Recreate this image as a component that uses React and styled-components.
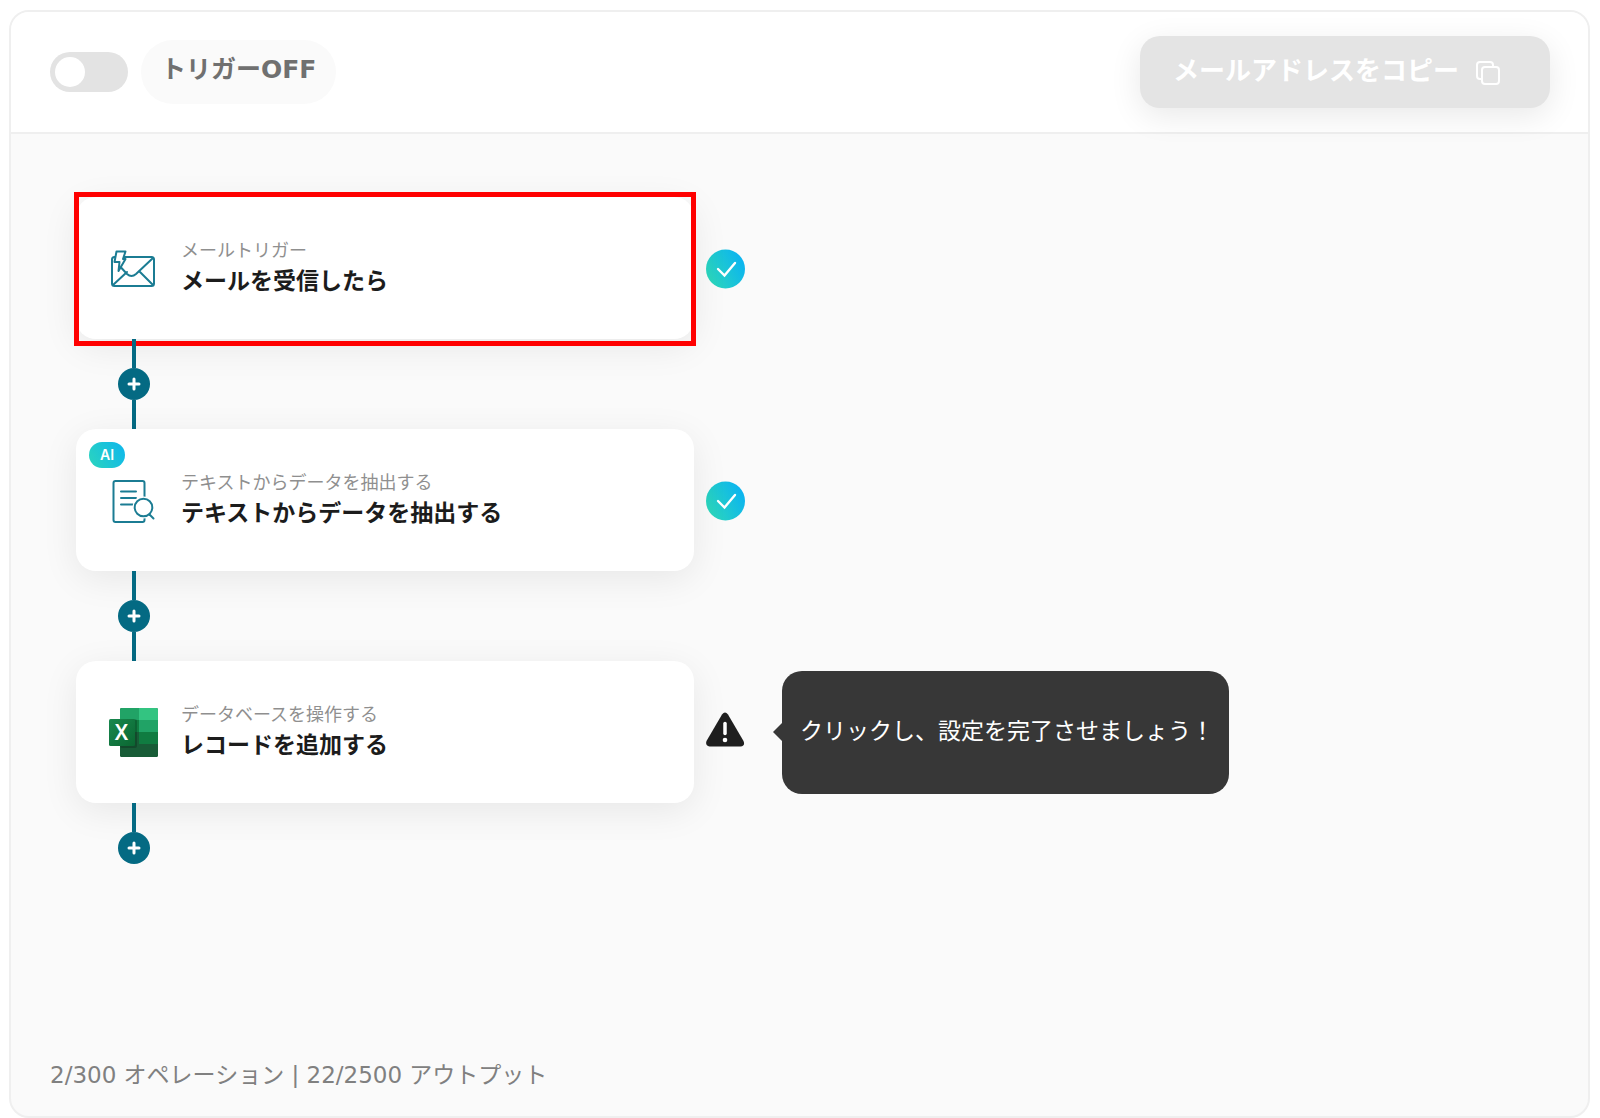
import React, { useState } from "react";
import styled, { createGlobalStyle } from "styled-components";

const teal = "#046a83";
const line = "#efefef";

const GlobalStyle = createGlobalStyle`
  *, *::before, *::after { box-sizing: border-box; }
  body {
    margin: 0;
    background: #fff;
    color: #1c1c1c;
    font-family: "DejaVu Sans", "Noto Sans CJK JP", sans-serif;
  }
  button { font: inherit; color: inherit; border: 0; margin: 0; }
`;

const Page = styled.div`
  display: flex;
  min-height: 100vh;
  padding: 10px 10px 0 9px;
`;

const Panel = styled.main`
  flex: 1;
  min-width: 0;
  display: flex;
  flex-direction: column;
  border: 2px solid ${line};
  border-radius: 20px;
  background: #fafafa;
  overflow: hidden;
`;

const Header = styled.header`
  display: flex;
  align-items: center;
  justify-content: space-between;
  padding: 24px 38px 24px 39px;
  border-bottom: 2px solid ${line};
  background: #fff;
`;

const TriggerSwitch = styled.div`
  display: flex;
  align-items: center;
  gap: 13px;
`;

const Toggle = styled.input`
  appearance: none;
  display: flex;
  width: 78px;
  height: 40px;
  margin: 0;
  padding: 5px;
  border-radius: 20px;
  background: #e3e3e3;
  cursor: pointer;

  &::before {
    content: "";
    width: 30px;
    height: 30px;
    border-radius: 50%;
    background: #fff;
  }

  &:checked {
    justify-content: flex-end;
    background: ${teal};
  }
`;

const ToggleLabel = styled.label`
  padding: 10px 20px 14px;
  border-radius: 32px;
  background: #fafafa;
  color: #707070;
  font-size: 25px;
  font-weight: 700;
  line-height: 40px;
`;

const CopyButton = styled.button`
  display: flex;
  align-items: center;
  gap: 16px;
  padding: 15px 49px 17px 33px;
  border-radius: 20px;
  background: #e4e4e4;
  box-shadow: 0 8px 32px rgba(0, 0, 0, 0.09);

  && {
    color: #fff;
    font-size: 26px;
    font-weight: 700;
    line-height: 40px;
  }

  svg { margin-top: 4px; }
`;

const Flow = styled.ol`
  flex: 1;
  margin: 0;
  padding: 63px 65px;
  list-style: none;
`;

const StepRow = styled.div`
  display: flex;
  align-items: center;
`;

const Card = styled.button`
  position: relative;
  flex: 0 1 618px;
  display: flex;
  align-items: center;
  gap: 22px;
  height: 142px;
  padding: 0 33px;
  border-radius: 20px;
  background: #fff;
  box-shadow: 0 8px 36px rgba(0, 0, 0, 0.08);
  text-align: left;
  cursor: pointer;
`;

const Highlight = styled.span`
  position: absolute;
  inset: -5px -2px -7px;
  border: 5px solid #f00;
`;

const AiBadge = styled.span`
  position: absolute;
  top: 13px;
  left: 13px;
  width: 36px;
  border-radius: 13px;
  background: linear-gradient(60deg, #2cd5bd, #0db6ee);
  color: #fff;
  font-family: Inter, sans-serif;
  font-size: 14px;
  font-weight: 600;
  line-height: 26px;
  text-align: center;
`;

const CardText = styled.span`
  display: flex;
  flex-direction: column;
  padding-bottom: 2px;
`;

const Kind = styled.span`
  color: #8f8f8f;
  font-size: 18px;
  line-height: 28px;
`;

const Title = styled.span`
  font-size: 23px;
  font-weight: 700;
  line-height: 32px;
`;

const Status = styled.span`
  flex: none;
  display: flex;
  width: 40px;
  margin-left: 12px;
`;

const Tip = styled.div`
  position: relative;
  margin-left: 36px;
  padding: 41px 15px 44px 18px;
  border-radius: 20px;
  background: #373737;
  color: #fff;
  font-size: 23px;
  line-height: 38px;

  &::before {
    content: "";
    position: absolute;
    top: 50%;
    right: 100%;
    border: 9px solid transparent;
    border-left: 0;
    border-right-color: #373737;
    transform: translateY(-50%);
  }
`;

const Connector = styled.div`
  display: flex;
  flex-direction: column;
  align-items: center;
  width: 32px;
  margin-left: 42px;
`;

const Wire = styled.span`
  position: relative;
  width: 4px;
  height: 29px;
  background: ${teal};
`;

const AddButton = styled.button`
  position: relative;
  display: flex;
  align-items: center;
  justify-content: center;
  width: 32px;
  height: 32px;
  padding: 0;
  border-radius: 50%;
  background: ${teal};
  cursor: pointer;
`;

const Usage = styled.footer`
  padding: 0 39px 23px;
  color: #808080;
  font-size: 23px;
  line-height: 36px;
`;

const CopyIcon = () => (
  <svg width="26" height="26" viewBox="0 0 26 26" fill="none" stroke="#fff" strokeWidth="2" aria-hidden="true">
    <rect x="7" y="7" width="17" height="17" rx="3" />
    <path d="M7 19H5a3 3 0 0 1-3-3V5a3 3 0 0 1 3-3h10a3 3 0 0 1 3 3v2" />
  </svg>
);

const MailIcon = () => (
  <svg width="50" height="50" viewBox="0 0 50 50" fill="none" stroke="#1b7c93" strokeWidth="2" strokeLinejoin="round" strokeLinecap="round" aria-hidden="true">
    <rect x="3" y="14" width="42" height="29" rx="2.500" />
    <path d="M44 15 27 31q-4.500 4-9 0L12.500 25M4 42l14-13M44 42 30 28" />
    <path d="M7.500 8.500h9L14 16h2.500L9.500 28l1-9H5.500z" fill="#fff" />
  </svg>
);

const DocumentSearchIcon = () => (
  <svg width="50" height="50" viewBox="0 0 50 50" fill="none" stroke="#1b7c93" strokeWidth="2" strokeLinejoin="round" strokeLinecap="round" aria-hidden="true">
    <rect x="4.500" y="6" width="31" height="41" rx="2" />
    <path d="M12 16.500h15M12 23h15M12 29.500h12" />
    <circle cx="34.500" cy="32.500" r="11" fill="#fff" stroke="none" />
    <circle cx="34.500" cy="32.500" r="8.800" />
    <path d="m40.500 39.500 4 4" />
  </svg>
);

const ExcelIcon = () => (
  <svg width="50" height="50" viewBox="0 0 50 50" aria-hidden="true">
    <defs>
      <clipPath id="sheet"><rect x="11" y="1" width="38" height="49" rx="1.500" /></clipPath>
      <linearGradient id="tile" x1="0" y1="0" x2="1" y2="1">
        <stop offset="0" stopColor="#18884f" />
        <stop offset="1" stopColor="#0b6631" />
      </linearGradient>
    </defs>
    <g clipPath="url(#sheet)">
      <rect x="11" y="1" width="38" height="49" fill="#185c37" />
      <rect x="11" y="1" width="19" height="12" fill="#21a366" />
      <rect x="30" y="1" width="19" height="12" fill="#33c481" />
      <rect x="11" y="13" width="19" height="12" fill="#107c41" />
      <rect x="30" y="13" width="19" height="12" fill="#21a366" />
      <rect x="30" y="25" width="19" height="12" fill="#107c41" />
      <rect x="11" y="12" width="17" height="29" rx="2" fill="#000" opacity="0.2" />
    </g>
    <rect x="0" y="12" width="26" height="27" rx="1.500" fill="url(#tile)" />
    <text x="12.500" y="33" textAnchor="middle" fill="#fff" fontFamily="'Noto Sans', sans-serif" fontWeight="600" fontSize="21">X</text>
  </svg>
);

const DoneIcon = () => (
  <svg width="40" height="42" viewBox="0 -2 40 42" role="img" aria-label="設定済み">
    <defs>
      <linearGradient id="done" x1="0" y1="0.800" x2="1" y2="0.300">
        <stop offset="0" stopColor="#2ed9b8" />
        <stop offset="1" stopColor="#0ab3f2" />
      </linearGradient>
    </defs>
    <circle cx="19.500" cy="20" r="19.500" fill="url(#done)" />
    <path d="m12 20 6.500 6.500L29 14" fill="none" stroke="#fff" strokeWidth="2.400" strokeLinecap="round" />
  </svg>
);

const WarningIcon = () => (
  <svg width="40" height="40" viewBox="0 0 40 40" role="img" aria-label="未設定">
    <path d="M16 2.500q3-4 6 0L37.500 29q2 5-3 5.500H3.500Q-1 33.500 .5 29z" fill="#1f1f1f" />
    <path d="M19 11.500v10" stroke="#fff" strokeWidth="3.500" strokeLinecap="round" />
    <circle cx="19" cy="28" r="2.300" fill="#fff" />
  </svg>
);

const PlusIcon = () => (
  <svg width="14" height="14" viewBox="0 0 14 14" stroke="#fff" strokeWidth="3" strokeLinecap="round" aria-hidden="true">
    <path d="M7 2v10M2 7h10" />
  </svg>
);

const steps = [
  { kind: "メールトリガー", title: "メールを受信したら", Icon: MailIcon, done: true, selected: true },
  { kind: "テキストからデータを抽出する", title: "テキストからデータを抽出する", Icon: DocumentSearchIcon, done: true, ai: true },
  { kind: "データベースを操作する", title: "レコードを追加する", Icon: ExcelIcon, tip: "クリックし、設定を完了させましょう！" },
];

function Step({ step, last }) {
  const { kind, title, Icon, done, selected, ai, tip } = step;
  return (
    <li>
      <StepRow>
        <Card type="button">
          {ai && <AiBadge>AI</AiBadge>}
          <Icon />
          <CardText>
            <Kind>{kind}</Kind>
            <Title>{title}</Title>
          </CardText>
          {selected && <Highlight />}
        </Card>
        <Status>{done ? <DoneIcon /> : <WarningIcon />}</Status>
        {tip && <Tip role="tooltip">{tip}</Tip>}
      </StepRow>
      <Connector>
        <Wire />
        <AddButton type="button" aria-label="追加"><PlusIcon /></AddButton>
        {!last && <Wire />}
      </Connector>
    </li>
  );
}

export default function App() {
  const [on, setOn] = useState(false);
  return (
    <Page>
      <GlobalStyle />
      <Panel>
        <Header>
          <TriggerSwitch>
            <Toggle id="trigger" type="checkbox" role="switch" checked={on} onChange={(e) => setOn(e.target.checked)} />
            <ToggleLabel htmlFor="trigger">{on ? "トリガーON" : "トリガーOFF"}</ToggleLabel>
          </TriggerSwitch>
          <CopyButton type="button" disabled={!on}>
            メールアドレスをコピー
            <CopyIcon />
          </CopyButton>
        </Header>
        <Flow>
          {steps.map((step, i) => (
            <Step key={step.kind} step={step} last={i === steps.length - 1} />
          ))}
        </Flow>
        <Usage>2/300 オペレーション | 22/2500 アウトプット</Usage>
      </Panel>
    </Page>
  );
}
